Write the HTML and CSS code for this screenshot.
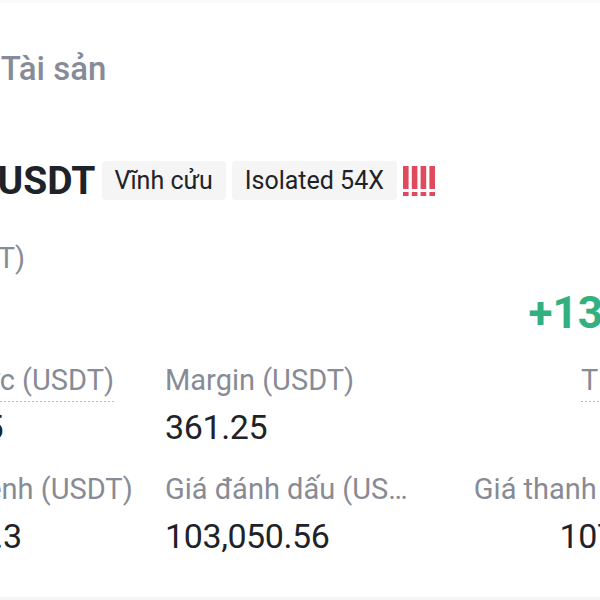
FILE: index.html
```html
<!DOCTYPE html>
<html lang="vi">
<head>
<meta charset="utf-8">
<title>Vị thế</title>
<link rel="stylesheet" href="styles.css">
</head>
<body>
<div class="topline"></div>
<main class="page">
  <nav class="tabs">
    <span class="tab">Vị thế (1)</span>
    <span class="tab">Tài sản</span>
  </nav>
  <section class="position">
    <header class="pos-head">
      <span class="coin"></span>
      <h2 class="symbol">BTCUSDT</h2>
      <span class="tag">Vĩnh cửu</span>
      <span class="tag">Isolated 54X</span>
      <svg class="risk" viewBox="0 0 32 30" aria-hidden="true">
        <g fill="#e04a5e">
          <rect x="0" y="0" width="5.6" height="23" rx="0.6"/>
          <rect x="8.8" y="0" width="5.6" height="23" rx="0.6"/>
          <rect x="17.6" y="0" width="5.6" height="23" rx="0.6"/>
          <rect x="26.4" y="0" width="5.6" height="23" rx="0.6"/>
          <rect x="0" y="26" width="5.6" height="4"/>
          <rect x="8.8" y="26" width="5.6" height="4"/>
          <rect x="17.6" y="26" width="5.6" height="4"/>
          <rect x="26.4" y="26" width="5.6" height="4"/>
        </g>
      </svg>
    </header>
    <div class="stats">
      <div class="stat stat-main"><span class="label">PnL (USDT)</span><span class="value"></span></div>
      <div class="stat stat-main"></div>
      <div class="stat stat-main right"><span class="label">ROI</span><span class="value big">+137.44%</span></div>

      <div class="stat"><span class="label hint">Kích thước (USDT)</span><span class="value">19,507.5</span></div>
      <div class="stat"><span class="label">Margin (USDT)</span><span class="value">361.25</span></div>
      <div class="stat right"><span class="label hint">Tỉ lệ ký quỹ</span><span class="value">3.49%</span></div>

      <div class="stat"><span class="label">Giá vào lệnh (USDT)</span><span class="value">105,742.3</span></div>
      <div class="stat"><span class="label">Giá đánh dấu (USDT)</span><span class="value">103,050.56</span></div>
      <div class="stat right"><span class="label">Giá thanh lý (USDT)</span><span class="value">107,238.45</span></div>
    </div>
  </section>
  <div class="divider"></div>
</main>
</body>
</html>
```
FILE: styles.css
```css
html, body {
  margin: 0;
  padding: 0;
  background: #ffffff;
}
body {
  overflow: hidden;
  font-family: Roboto, "Noto Sans", "Liberation Sans", sans-serif;
  color: #1e2329;
}
.topline {
  height: 3px;
  background: #f9f9fa;
}
.page {
  width: 848px;
  margin-left: -124px;
}
.tabs {
  display: flex;
  gap: 40px;
  margin-left: -50px;
  margin-top: 46px;
  height: 40px;
}
.tab {
  font-size: 33px;
  line-height: 40px;
  font-weight: 500;
  color: #878b97;
  white-space: nowrap;
}
.pos-head {
  display: flex;
  align-items: center;
  gap: 6px;
  margin-top: 72px;
  height: 39px;
}
.coin {
  width: 40px;
  height: 40px;
  border-radius: 50%;
  background: #f7931a;
  margin-right: 2px;
  flex: none;
}
.symbol {
  margin: 2px 0 0 0;
  font-size: 39px;
  line-height: 39px;
  font-weight: 700;
  color: #1e2329;
  white-space: nowrap;
}
.tag {
  background: #f5f5f5;
  border-radius: 4px;
  padding: 0 13px;
  font-size: 25px;
  line-height: 39px;
  color: #1e2329;
  white-space: nowrap;
}
.risk {
  width: 32px;
  height: 30px;
  flex: none;
}
.stats {
  display: grid;
  grid-template-columns: 265px 255px 1fr;
  column-gap: 24px;
  row-gap: 25px;
  margin-top: 41px;
}
.stat {
  display: flex;
  flex-direction: column;
  align-items: flex-start;
  gap: 5px;
  min-width: 0;
}
.stat-main {
  gap: 8px;
}
.stat.right {
  align-items: flex-end;
}
.label {
  display: block;
  max-width: 100%;
  font-size: 29px;
  line-height: 34px;
  color: #878b95;
  padding-bottom: 5px;
  white-space: nowrap;
  overflow: hidden;
  text-overflow: ellipsis;
}
.label.hint {
  background: linear-gradient(to right, #b4b9c1 50%, transparent 0) left bottom / 4px 1px repeat-x;
}
.value {
  font-size: 34px;
  line-height: 40px;
  letter-spacing: -0.4px;
  color: #1e2329;
  white-space: nowrap;
}
.value.big {
  font-size: 44px;
  line-height: 50px;
  font-weight: 700;
  letter-spacing: 0;
  color: #32b07f;
}
.divider {
  margin-top: 41px;
  height: 8px;
  background: #f5f5f5;
}
```
